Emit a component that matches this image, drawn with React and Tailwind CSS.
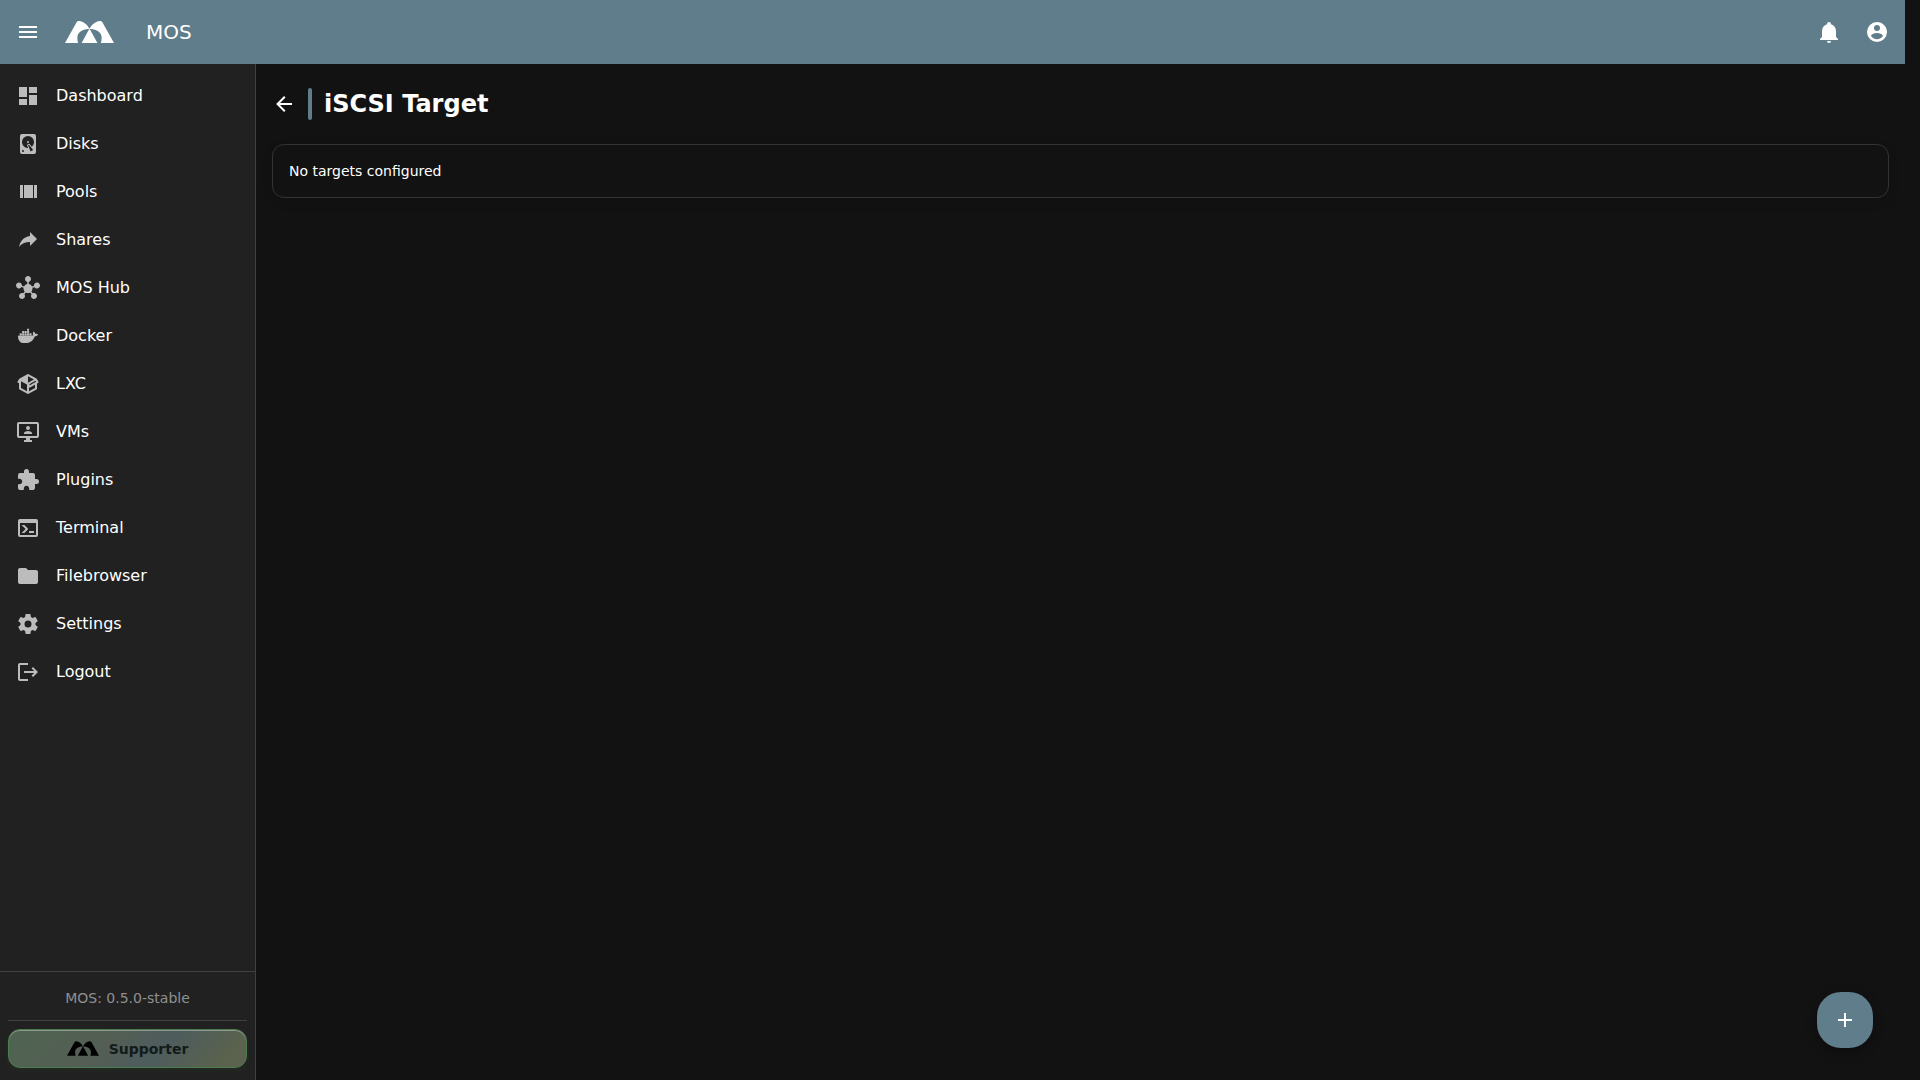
import React from 'react';
import { MdHub } from 'react-icons/md';

const icons = {
  menu: 'M3,6H21V8H3V6M3,11H21V13H3V11M3,16H21V18H3V16Z',
  dashboard: 'M13,3V9H21V3M13,21H21V11H13M3,21H11V15H3M3,13H11V3H3V13Z',
  disk: 'M6,2H18A2,2 0 0,1 20,4V20A2,2 0 0,1 18,22H6A2,2 0 0,1 4,20V4A2,2 0 0,1 6,2M12,4A6,6 0 0,0 6,10C6,13.31 8.69,16 12.1,16L11.22,13.77C10.95,13.29 11.11,12.68 11.59,12.4L12.45,11.9C12.93,11.63 13.54,11.79 13.82,12.27L15.74,14.69C17.12,13.59 18,11.9 18,10A6,6 0 0,0 12,4M12,9A1,1 0 0,1 13,10A1,1 0 0,1 12,11A1,1 0 0,1 11,10A1,1 0 0,1 12,9M7,18A1,1 0 0,0 6,19A1,1 0 0,0 7,20A1,1 0 0,0 8,19A1,1 0 0,0 7,18M12.09,13.27L14.58,19.58L17.17,18.08L12.95,12.77L12.09,13.27Z',
  pools: 'M8,18H17V5H8M18,5V18H21V5M4,18H7V5H4V18Z',
  share: 'M21,11L14,4V8C7,9 4,14 3,19C5.5,15.5 9,13.9 14,13.9V18L21,11Z',
  docker: 'M21.81 10.25C21.75 10.21 21.25 9.82 20.17 9.82C19.89 9.82 19.61 9.85 19.33 9.9C19.12 8.5 17.95 7.79 17.9 7.76L17.61 7.59L17.43 7.86C17.19 8.22 17 8.63 16.92 9.05C16.72 9.85 16.84 10.61 17.25 11.25C16.76 11.53 15.96 11.6 15.79 11.6H2.62C2.28 11.6 2 11.88 2 12.22C2 13.36 2.18 14.5 2.58 15.58C3.03 16.76 3.71 17.63 4.58 18.16C5.56 18.76 7.17 19.1 9 19.1C9.79 19.1 10.61 19.03 11.42 18.88C12.54 18.68 13.62 18.29 14.61 17.72C15.43 17.25 16.16 16.65 16.78 15.95C17.83 14.77 18.45 13.45 18.9 12.29H19.09C20.23 12.29 20.94 11.83 21.33 11.44C21.59 11.2 21.79 10.9 21.92 10.56L22 10.32L21.81 10.25M3.85 11.24H5.61C5.69 11.24 5.77 11.17 5.77 11.08V9.5C5.77 9.42 5.7 9.34 5.61 9.34H3.85C3.76 9.34 3.69 9.41 3.69 9.5V11.08C3.7 11.17 3.76 11.24 3.85 11.24M6.28 11.24H8.04C8.12 11.24 8.2 11.17 8.2 11.08V9.5C8.2 9.42 8.13 9.34 8.04 9.34H6.28C6.19 9.34 6.12 9.41 6.12 9.5V11.08C6.12 11.17 6.19 11.24 6.28 11.24M8.75 11.24H10.5C10.6 11.24 10.67 11.17 10.67 11.08V9.5C10.67 9.42 10.61 9.34 10.5 9.34H8.75C8.67 9.34 8.6 9.41 8.6 9.5V11.08C8.6 11.17 8.66 11.24 8.75 11.24M11.19 11.24H12.96C13.05 11.24 13.12 11.17 13.12 11.08V9.5C13.12 9.42 13.05 9.34 12.96 9.34H11.19C11.11 9.34 11.04 9.41 11.04 9.5V11.08C11.04 11.17 11.11 11.24 11.19 11.24M6.28 9H8.04C8.12 9 8.2 8.91 8.2 8.82V7.25C8.2 7.16 8.13 7.09 8.04 7.09H6.28C6.19 7.09 6.12 7.15 6.12 7.25V8.82C6.12 8.91 6.19 9 6.28 9M8.75 9H10.5C10.6 9 10.67 8.91 10.67 8.82V7.25C10.67 7.16 10.61 7.09 10.5 7.09H8.75C8.67 7.09 8.6 7.15 8.6 7.25V8.82C8.6 8.91 8.66 9 8.75 9M11.19 9H12.96C13.05 9 13.12 8.91 13.12 8.82V7.25C13.12 7.16 13.05 7.09 12.96 7.09H11.19C11.11 7.09 11.04 7.15 11.04 7.25V8.82C11.04 8.91 11.11 9 11.19 9M11.19 6.72H12.96C13.05 6.72 13.12 6.65 13.12 6.56V5C13.12 4.9 13.05 4.83 12.96 4.83H11.19C11.11 4.83 11.04 4.89 11.04 5V6.56C11.04 6.64 11.11 6.72 11.19 6.72M13.65 11.24H15.41C15.5 11.24 15.57 11.17 15.57 11.08V9.5C15.57 9.42 15.5 9.34 15.41 9.34H13.65C13.57 9.34 13.5 9.41 13.5 9.5V11.08C13.5 11.17 13.57 11.24 13.65 11.24',
  lxc: 'M2,10.96C1.5,10.68 1.35,10.07 1.63,9.59L3.13,7C3.24,6.8 3.41,6.66 3.6,6.58L11.43,2.18C11.59,2.06 11.79,2 12,2C12.21,2 12.41,2.06 12.57,2.18L20.47,6.62C20.66,6.72 20.82,6.88 20.91,7.08L22.36,9.6C22.64,10.08 22.47,10.69 22,10.96L21,11.54V16.5C21,16.88 20.79,17.21 20.47,17.38L12.57,21.82C12.41,21.94 12.21,22 12,22C11.79,22 11.59,21.94 11.43,21.82L3.53,17.38C3.21,17.21 3,16.88 3,16.5V10.96C2.7,11.13 2.32,11.14 2,10.96M12,4.15V4.15L12,10.85V10.85L17.96,7.5L12,4.15M5,15.91L11,19.29V12.58L5,9.21V15.91M19,15.91V12.69L14,15.59C13.67,15.77 13.3,15.76 13,15.6V19.29L19,15.91M13.85,13.36L20.13,9.73L19.55,8.72L13.27,12.35L13.85,13.36Z',
  vms: 'M21,16V4H3V16H21M21,2A2,2 0 0,1 23,4V16A2,2 0 0,1 21,18H14V20H16V22H8V20H10V18H3C1.89,18 1,17.1 1,16V4C1,2.89 1.89,2 3,2H21M8,14V13C8,11.67 10.67,11 12,11C13.33,11 16,11.67 16,13V14H8M12,6A2,2 0 0,1 14,8A2,2 0 0,1 12,10A2,2 0 0,1 10,8A2,2 0 0,1 12,6Z',
  puzzle: 'M20.5,11H19V7C19,5.89 18.1,5 17,5H13V3.5A2.5,2.5 0 0,0 10.5,1A2.5,2.5 0 0,0 8,3.5V5H4A2,2 0 0,0 2,7V10.8H3.5C5,10.8 6.2,12 6.2,13.5C6.2,15 5,16.2 3.5,16.2H2V20A2,2 0 0,0 4,22H7.8V20.5C7.8,19 9,17.8 10.5,17.8C12,17.8 13.2,19 13.2,20.5V22H17A2,2 0 0,0 19,20V16H20.5A2.5,2.5 0 0,0 23,13.5A2.5,2.5 0 0,0 20.5,11Z',
  console: 'M20,19V7H4V19H20M20,3A2,2 0 0,1 22,5V19A2,2 0 0,1 20,21H4A2,2 0 0,1 2,19V5C2,3.89 2.9,3 4,3H20M13,17V15H18V17H13M9.58,13L5.57,9H8.4L11.7,12.3C12.09,12.69 12.09,13.33 11.7,13.72L8.42,17H5.59L9.58,13Z',
  folder: 'M10,4H4C2.89,4 2,4.89 2,6V18A2,2 0 0,0 4,20H20A2,2 0 0,0 22,18V8C22,6.89 21.1,6 20,6H12L10,4Z',
  cog: 'M12,15.5A3.5,3.5 0 0,1 8.5,12A3.5,3.5 0 0,1 12,8.5A3.5,3.5 0 0,1 15.5,12A3.5,3.5 0 0,1 12,15.5M19.43,12.97C19.47,12.65 19.5,12.33 19.5,12C19.5,11.67 19.47,11.34 19.43,11L21.54,9.37C21.73,9.22 21.78,8.95 21.66,8.73L19.66,5.27C19.54,5.05 19.27,4.96 19.05,5.05L16.56,6.05C16.04,5.66 15.5,5.32 14.87,5.07L14.5,2.42C14.46,2.18 14.25,2 14,2H10C9.75,2 9.54,2.18 9.5,2.42L9.13,5.07C8.5,5.32 7.96,5.66 7.44,6.05L4.95,5.05C4.73,4.96 4.46,5.05 4.34,5.27L2.34,8.73C2.21,8.95 2.27,9.22 2.46,9.37L4.57,11C4.53,11.34 4.5,11.67 4.5,12C4.5,12.33 4.53,12.65 4.57,12.97L2.46,14.63C2.27,14.78 2.21,15.05 2.34,15.27L4.34,18.73C4.46,18.95 4.73,19.03 4.95,18.95L7.44,17.94C7.96,18.34 8.5,18.68 9.13,18.93L9.5,21.58C9.54,21.82 9.75,22 10,22H14C14.25,22 14.46,21.82 14.5,21.58L14.87,18.93C15.5,18.67 16.04,18.34 16.56,17.94L19.05,18.95C19.27,19.03 19.54,18.95 19.66,18.73L21.66,15.27C21.78,15.05 21.73,14.78 21.54,14.63L19.43,12.97Z',
  logout: 'M17 7L15.59 8.41L18.17 11H8V13H18.17L15.59 15.58L17 17L22 12M4 5H12V3H4C2.9 3 2 3.9 2 5V19C2 20.1 2.9 21 4 21H12V19H4V5Z',
  bell: 'M21,19V20H3V19L5,17V11C5,7.9 7.03,5.17 10,4.29C10,4.19 10,4.1 10,4A2,2 0 0,1 12,2A2,2 0 0,1 14,4C14,4.1 14,4.19 14,4.29C16.97,5.17 19,7.9 19,11V17L21,19M14,21A2,2 0 0,1 12,23A2,2 0 0,1 10,21',
  account: 'M12,19.2C9.5,19.2 7.29,17.92 6,16C6.03,14 10,12.9 12,12.9C14,12.9 17.97,14 18,16C16.71,17.92 14.5,19.2 12,19.2M12,5A3,3 0 0,1 15,8A3,3 0 0,1 12,11A3,3 0 0,1 9,8A3,3 0 0,1 12,5M12,2A10,10 0 0,0 2,12A10,10 0 0,0 12,22A10,10 0 0,0 22,12C22,6.47 17.5,2 12,2Z',
  back: 'M20,11V13H8L13.5,18.5L12.08,19.92L4.16,12L12.08,4.08L13.5,5.5L8,11H20Z',
  plus: 'M19,13H13V19H11V13H5V11H11V5H13V11H19V13Z',
};

const navItems = [
  { label: 'Dashboard', icon: 'dashboard' },
  { label: 'Disks', icon: 'disk' },
  { label: 'Pools', icon: 'pools' },
  { label: 'Shares', icon: 'share' },
  { label: 'MOS Hub', icon: 'hub' },
  { label: 'Docker', icon: 'docker' },
  { label: 'LXC', icon: 'lxc' },
  { label: 'VMs', icon: 'vms' },
  { label: 'Plugins', icon: 'puzzle' },
  { label: 'Terminal', icon: 'console' },
  { label: 'Filebrowser', icon: 'folder' },
  { label: 'Settings', icon: 'cog' },
  { label: 'Logout', icon: 'logout' },
];

function Icon({ name }) {
  if (name === 'hub') return <MdHub className="w-6 h-6 shrink-0" aria-hidden="true" />;
  return (
    <svg viewBox="0 0 24 24" className="w-6 h-6 shrink-0" fill="currentColor" aria-hidden="true">
      <path d={icons[name]} />
    </svg>
  );
}

function Logo({ className }) {
  return (
    <svg viewBox="0 0 49 22" className={className} fill="currentColor" aria-hidden="true">
      <path d="M0,22L11.6,1.2Q12.3,0 14,0C18.5,0.3 22.2,3.4 24.5,8C17.5,7.6 12.4,11.4 12.4,16.4C12.4,18.6 12.5,20.4 13.2,22Z" />
      <path d="M49,22L37.4,1.2Q36.7,0 35,0C30.5,0.3 26.8,3.4 24.5,8C31.5,7.6 36.6,11.4 36.6,16.4C36.6,18.6 36.5,20.4 35.8,22Z" />
      <path d="M24.5,7.6L32.4,22H16.6Z" />
    </svg>
  );
}

function AppBar() {
  return (
    <header className="h-16 shrink-0 mr-[15px] flex items-center bg-[#607d8b] text-white">
      <button aria-label="Toggle navigation" className="ml-1 w-12 h-12 flex items-center justify-center">
        <Icon name="menu" />
      </button>
      <Logo className="ml-[13px] w-[49px] h-[22px]" />
      <h1 className="ml-8 text-xl">MOS</h1>
      <div className="ml-auto mr-1 flex">
        <button aria-label="Notifications" className="w-12 h-12 flex items-center justify-center">
          <Icon name="bell" />
        </button>
        <button aria-label="Account" className="w-12 h-12 flex items-center justify-center">
          <Icon name="account" />
        </button>
      </div>
    </header>
  );
}

function Sidebar() {
  return (
    <aside className="w-64 shrink-0 flex flex-col bg-[#212121] border-r border-[#414141]">
      <nav className="flex-1 min-h-0 py-2">
        {navItems.map((item) => (
          <a key={item.label} href="#" className="h-12 px-4 flex items-center gap-4 text-white">
            <span className="text-[#bcbcbc]">
              <Icon name={item.icon} />
            </span>
            {item.label}
          </a>
        ))}
      </nav>
      <div className="border-t border-[#414141] px-2 pb-3">
        <p className="h-12 flex items-center justify-center pt-1 text-sm text-[#909090]">MOS: 0.5.0-stable</p>
        <div className="border-t border-[#414141] pt-2">
          <button className="w-full h-[39px] flex items-center justify-center gap-2.5 rounded-xl border border-[#4c7d50] bg-linear-[135deg,#4f6451_0%,#545e54_40%,#4d5c5d_62%,#5b624d_90%] text-sm font-bold text-[#121a1a] shadow-[inset_0_1px_0_rgba(255,255,255,0.35),0_2px_6px_rgba(76,175,80,0.08)]">
            <Logo className="w-8 h-[15px] text-black" />
            Supporter
          </button>
        </div>
      </div>
    </aside>
  );
}

export default function App() {
  return (
    <div className="h-screen flex flex-col bg-[#121212] text-white font-['DejaVu_Sans',sans-serif]">
      <AppBar />
      <div className="flex-1 min-h-0 flex">
        <Sidebar />
        <main className="flex-1 min-w-0 pl-4 pr-[31px] pt-6">
          <div className="flex items-center mb-6">
            <button aria-label="Back" className="mr-3">
              <Icon name="back" />
            </button>
            <div className="w-1 h-8 mr-3 rounded-xs bg-[#607d8b]" />
            <h2 className="text-2xl font-bold">iSCSI Target</h2>
          </div>
          <section className="p-4 rounded-xl border border-[#333333] text-sm shadow-[0_4px_12px_rgba(0,0,0,0.1)]">
            No targets configured
          </section>
        </main>
      </div>
      <button
        aria-label="Add target"
        className="fixed right-[47px] bottom-8 w-14 h-14 flex items-center justify-center rounded-3xl bg-[#607d8b] shadow-[0_4px_12px_rgba(0,0,0,0.3)]"
      >
        <Icon name="plus" />
      </button>
    </div>
  );
}
